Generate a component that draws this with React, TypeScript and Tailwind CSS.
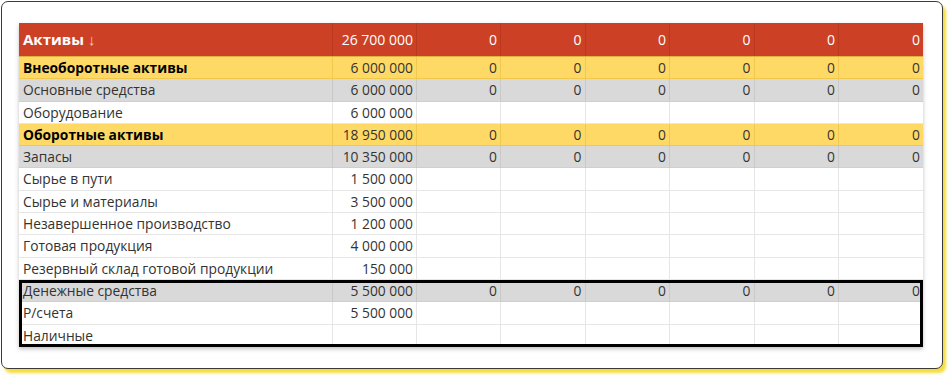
import React from "react";

type Kind = "yellow" | "gray" | "white";
type Row = { label: string; value: string; zeros: boolean; kind: Kind; bold?: boolean };

const rows: Row[] = [
  { label: "Внеоборотные активы", value: "6 000 000", zeros: true, kind: "yellow", bold: true },
  { label: "Основные средства", value: "6 000 000", zeros: true, kind: "gray" },
  { label: "Оборудование", value: "6 000 000", zeros: false, kind: "white" },
  { label: "Оборотные активы", value: "18 950 000", zeros: true, kind: "yellow", bold: true },
  { label: "Запасы", value: "10 350 000", zeros: true, kind: "gray" },
  { label: "Сырье в пути", value: "1 500 000", zeros: false, kind: "white" },
  { label: "Сырье и материалы", value: "3 500 000", zeros: false, kind: "white" },
  { label: "Незавершенное производство", value: "1 200 000", zeros: false, kind: "white" },
  { label: "Готовая продукция", value: "4 000 000", zeros: false, kind: "white" },
  { label: "Резервный склад готовой продукции", value: "150 000", zeros: false, kind: "white" },
];

const cash: Row[] = [
  { label: "Денежные средства", value: "5 500 000", zeros: true, kind: "gray" },
  { label: "Р/счета", value: "5 500 000", zeros: false, kind: "white" },
  { label: "Наличные", value: "", zeros: false, kind: "white" },
];

const rowCls: Record<Kind, string> = {
  yellow: "bg-[#ffd966] border-[#f1c84a]",
  gray: "bg-[#d9d9d9] border-[#cfcfcf]",
  white: "bg-white border-[#e6e6e6]",
};

const cellCls: Record<Kind, string> = {
  yellow: "border-[#f0c850]",
  gray: "border-[#c9c9c9]",
  white: "border-[#e6e6e6]",
};

const extra = [0, 1, 2, 3, 4, 5];

function DataRow({ r }: { r: Row }) {
  return (
    <div className={`grid grid-cols-[314px_84px_84px_84.5px_84.5px_84.5px_84.5px_84px] h-[22.3px] border-b text-[13.8px] leading-[22px] text-[#333] ${rowCls[r.kind]}`}>
      <div className={`pl-[4px] border-r whitespace-nowrap overflow-hidden ${cellCls[r.kind]} ${r.bold ? "font-bold text-black" : ""}`}>
        {r.label}
      </div>
      <div className={`pr-[3px] text-right border-r ${cellCls[r.kind]}`}>{r.value}</div>
      {extra.map((i) => (
        <div key={i} className={`pr-[3px] text-right ${i < 5 ? "border-r" : ""} ${cellCls[r.kind]}`}>
          {r.zeros ? "0" : ""}
        </div>
      ))}
    </div>
  );
}

export default function App() {
  return (
    <div className="w-[950px] h-[377px] bg-white pt-[1px] pl-[1px]" style={{ fontFamily: '"Open Sans", "Liberation Sans", sans-serif' }}>
      <div className="w-[942px] h-[368px] bg-white border border-[#3a3a3a] rounded-[7px] shadow-[3px_4px_3px_#f5dc3c] pl-[17px] pt-[21px]">
        <div className="w-[904px] shadow-[0_2px_4px_rgba(0,0,0,0.25)]">
          <div className="grid grid-cols-[314px_84px_84px_84.5px_84.5px_84.5px_84.5px_84px] h-[34px] bg-[#cc4125] text-white items-center border-b border-[#e0b040]">
            <div className="pl-[4px] h-full flex items-center border-r border-[#b8391f] text-[15px] font-bold">
              Активы <span className="font-normal ml-[4px] text-[#f4d0c0]">↓</span>
            </div>
            <div className="h-full flex items-center justify-end pr-[3px] border-r border-[#b8391f] text-[14px]">26 700 000</div>
            {extra.map((i) => (
              <div key={i} className={`h-full flex items-center justify-end pr-[3px] text-[14px] ${i < 5 ? "border-r border-[#b8391f]" : ""}`}>
                0
              </div>
            ))}
          </div>
          {rows.map((r, i) => (
            <DataRow key={i} r={r} />
          ))}
          <div className="relative">
            {cash.map((r, i) => (
              <DataRow key={i} r={r} />
            ))}
            <div className="absolute inset-0 border-[3px] border-black pointer-events-none" />
          </div>
        </div>
      </div>
    </div>
  );
}
